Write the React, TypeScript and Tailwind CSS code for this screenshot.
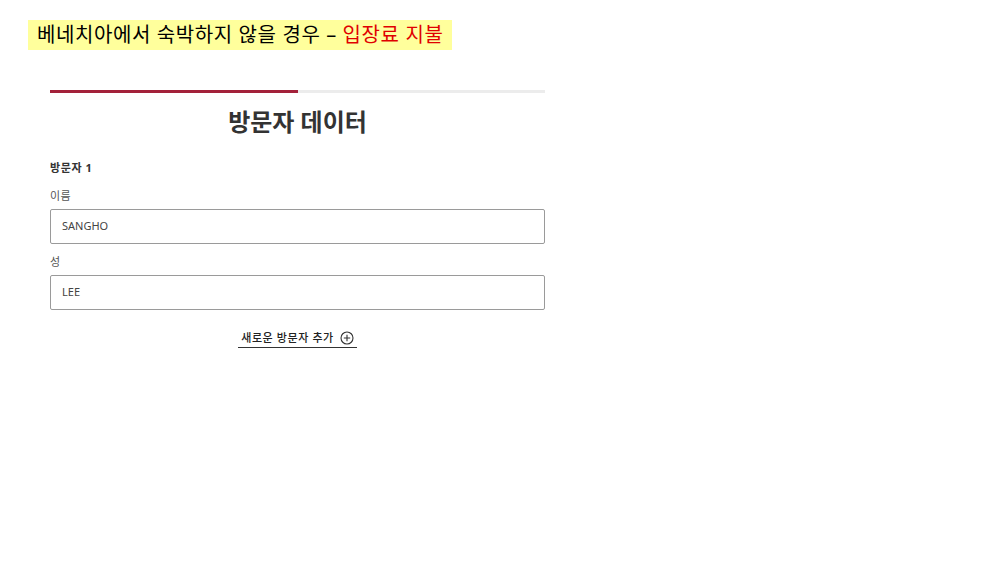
import React from 'react';

const visitor = {
  label: '방문자 1',
  firstName: 'SANGHO',
  lastName: 'LEE',
};

const PlusCircle = () => (
  <svg width="14" height="14" viewBox="0 0 14 14" fill="none" stroke="#333" strokeWidth="1.1">
    <circle cx="7" cy="7" r="6" />
    <path d="M7 3.8v6.4M3.8 7h6.4" />
  </svg>
);

const Field = ({ label, value, top }: { label: string; value: string; top: string }) => (
  <div className={top}>
    <div className="h-[16px] text-[11px] leading-[16px] tracking-[0.5px] text-[#555]">{label}</div>
    <div className="mt-[5px] flex h-[35px] items-center rounded-[2px] border border-[#9a9a9a] bg-white px-[11px] text-[11px] text-[#444]">
      {value}
    </div>
  </div>
);

const App = () => {
  return (
    <div
      className="min-h-screen bg-white pt-[20px]"
      style={{ fontFamily: '"Noto Sans", "Noto Sans CJK KR", sans-serif' }}
    >
      <div className="pl-[28px]">
        <div className="inline-flex h-[30px] items-center bg-[#ffff9c] px-[9px] text-[20px] tracking-[0.6px] text-black">
          베네치아에서 숙박하지 않을 경우 –&nbsp;<span className="text-[#e00000]">입장료 지불</span>
        </div>
      </div>

      <div className="ml-[50px] mt-[40px] w-[495px]">
        <div className="flex h-[3px]">
          <div className="w-1/2 bg-[#a3213a]" />
          <div className="w-1/2 bg-[#ececec]" />
        </div>

        <h1 className="mt-[14px] h-[30px] text-center text-[24px] font-bold leading-[30px] text-[#333]">
          방문자 데이터
        </h1>

        <div className="mt-[23px] h-[16px] text-[11px] font-bold leading-[16px] tracking-[0.6px] text-[#333]">
          {visitor.label}
        </div>

        <Field label="이름" value={visitor.firstName} top="mt-[12px]" />
        <Field label="성" value={visitor.lastName} top="mt-[10px]" />

        <div className="mt-[20px] flex justify-center">
          <button className="flex items-center gap-[6px] border-b border-[#333] px-[3px] pb-[1px] text-[11px] font-medium leading-[16px] tracking-[0.6px] text-[#222]">
            새로운 방문자 추가
            <PlusCircle />
          </button>
        </div>
      </div>
    </div>
  );
};

export default App;
